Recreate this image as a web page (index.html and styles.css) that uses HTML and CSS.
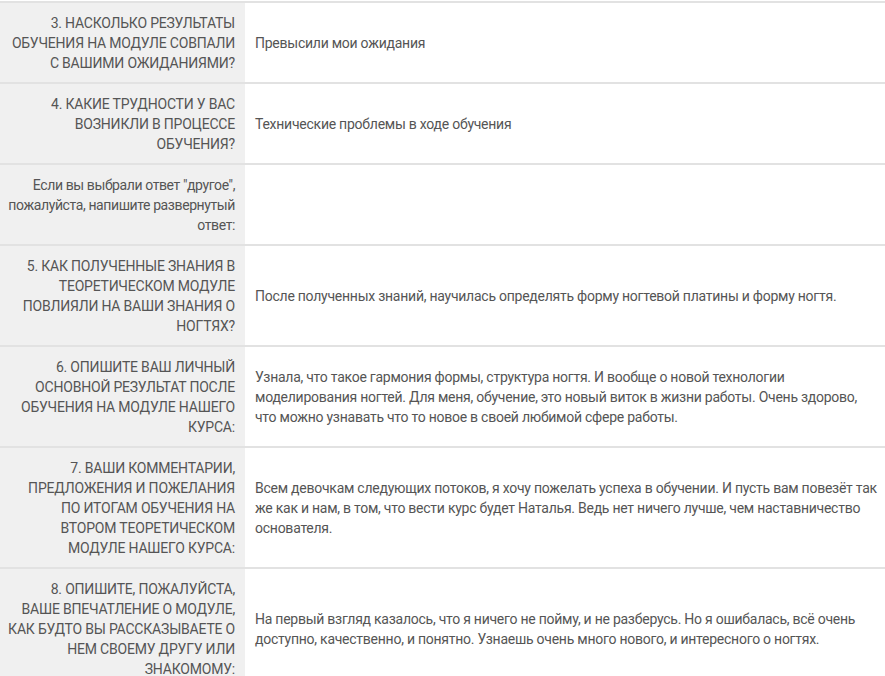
FILE: index.html
```html
<!DOCTYPE html>
<html lang="ru">
<head>
<meta charset="utf-8">
<link rel="stylesheet" href="styles.css">
</head>
<body>
<table class="answers">
  <tr>
    <th class="q">3. НАСКОЛЬКО РЕЗУЛЬТАТЫ ОБУЧЕНИЯ НА МОДУЛЕ СОВПАЛИ С ВАШИМИ ОЖИДАНИЯМИ?</th>
    <td class="a">Превысили мои ожидания</td>
  </tr>
  <tr>
    <th class="q">4. КАКИЕ ТРУДНОСТИ У ВАС ВОЗНИКЛИ В ПРОЦЕССЕ ОБУЧЕНИЯ?</th>
    <td class="a">Технические проблемы в ходе обучения</td>
  </tr>
  <tr>
    <th class="q q-note">Если вы выбрали ответ "другое", пожалуйста, напишите развернутый ответ:</th>
    <td class="a"></td>
  </tr>
  <tr>
    <th class="q">5. КАК ПОЛУЧЕННЫЕ ЗНАНИЯ В ТЕОРЕТИЧЕСКОМ МОДУЛЕ ПОВЛИЯЛИ НА ВАШИ ЗНАНИЯ О НОГТЯХ?</th>
    <td class="a">После полученных знаний, научилась определять форму ногтевой платины и форму ногтя.</td>
  </tr>
  <tr>
    <th class="q">6. ОПИШИТЕ ВАШ ЛИЧНЫЙ ОСНОВНОЙ РЕЗУЛЬТАТ ПОСЛЕ ОБУЧЕНИЯ НА МОДУЛЕ НАШЕГО КУРСА:</th>
    <td class="a">Узнала, что такое гармония формы, структура ногтя. И вообще о новой технологии моделирования ногтей. Для меня, обучение, это новый виток в жизни работы. Очень здорово, что можно узнавать что то новое в своей любимой сфере работы.</td>
  </tr>
  <tr>
    <th class="q">7. ВАШИ КОММЕНТАРИИ, ПРЕДЛОЖЕНИЯ И ПОЖЕЛАНИЯ ПО ИТОГАМ ОБУЧЕНИЯ НА ВТОРОМ ТЕОРЕТИЧЕСКОМ МОДУЛЕ НАШЕГО КУРСА:</th>
    <td class="a">Всем девочкам следующих потоков, я хочу пожелать успеха в обучении. И пусть вам повезёт так же как и нам, в том, что вести курс будет Наталья. Ведь нет ничего лучше, чем наставничество основателя.</td>
  </tr>
  <tr>
    <th class="q">8. ОПИШИТЕ, ПОЖАЛУЙСТА, ВАШЕ&nbsp;ВПЕЧАТЛЕНИЕ О МОДУЛЕ, КАК БУДТО ВЫ РАССКАЗЫВАЕТЕ О НЕМ СВОЕМУ ДРУГУ ИЛИ ЗНАКОМОМУ:</th>
    <td class="a">На первый взгляд казалось, что я ничего не пойму, и не разберусь. Но я ошибалась, всё очень доступно, качественно, и понятно. Узнаешь очень много нового, и интересного о ногтях.</td>
  </tr>
</table>
</body>
</html>
```

FILE: styles.css
```css
html, body {
  margin: 0;
  padding: 0;
  background: #ffffff;
}
body {
  padding-top: 1px;
  font-family: Roboto, Lato, sans-serif;
  font-size: 14px;
  line-height: 20px;
  color: #555555;
}
.answers {
  width: 885px;
  border-collapse: collapse;
  border-top: 2px solid #e2e2e2;
}
.answers tr {
  border-bottom: 2px solid #e2e2e2;
}
.q {
  width: 227px;
  background: #f0f0f0;
  text-align: right;
  font-weight: normal;
  padding: 10px 10px 9px 8px;
  vertical-align: middle;
  letter-spacing: -0.2px;
}
.q-note {
  letter-spacing: -0.4px;
}
.a {
  padding: 10px 5px 9px 10px;
  vertical-align: middle;
  text-align: left;
  letter-spacing: -0.25px;
}
```
